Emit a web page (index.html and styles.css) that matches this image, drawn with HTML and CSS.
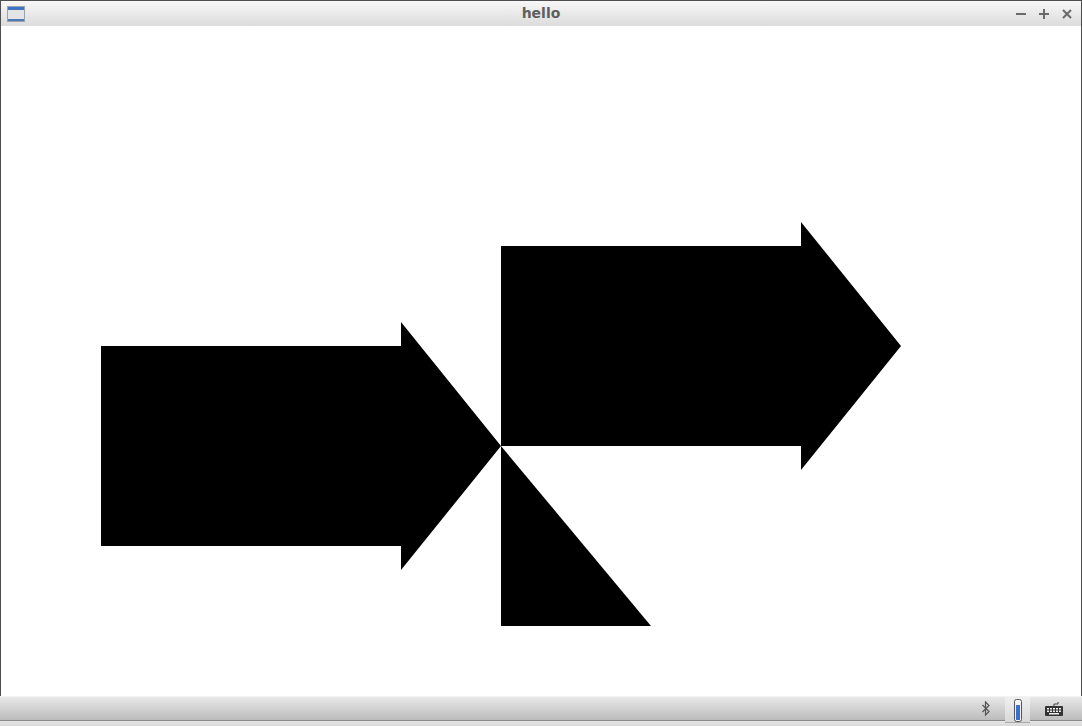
FILE: index.html
```html
<!DOCTYPE html>
<html>
<head>
<meta charset="utf-8">
<link rel="stylesheet" href="styles.css">
</head>
<body>
<div class="screen">
  <div class="window">
    <div class="titlebar">
      <div class="app-icon">
        <svg width="20" height="18" viewBox="0 0 20 18">
          <rect x="0.5" y="0.5" width="17" height="15" fill="#e4e4e4" stroke="#9aa3ad"/>
          <rect x="1" y="1" width="16" height="3" fill="#3f74c4"/>
          <rect x="1" y="13" width="16" height="2" fill="#4d78b8"/>
        </svg>
      </div>
      <div class="title">hello</div>
      <div class="controls">
        <svg width="14" height="14" viewBox="0 0 14 14"><path d="M2 7h10" stroke="#6a6a6a" stroke-width="2"/></svg>
        <svg width="14" height="14" viewBox="0 0 14 14"><path d="M2 7h10M7 2v10" stroke="#6a6a6a" stroke-width="2"/></svg>
        <svg width="14" height="14" viewBox="0 0 14 14"><path d="M3 3l8 8M11 3l-8 8" stroke="#6a6a6a" stroke-width="2"/></svg>
      </div>
    </div>
    <div class="canvas">
      <svg class="drawing" width="1080" height="670" viewBox="0 0 1080 670">
        <polygon points="100,320 400,320 400,296 500,420 400,544 400,520 100,520" fill="#000"/>
        <polygon points="500,220 800,220 800,196 900,320 800,444 800,420 500,420" fill="#000"/>
        <polygon points="500,420 650,600 500,600" fill="#000"/>
      </svg>
    </div>
  </div>
  <div class="taskbar">
    <div class="tray">
      <div class="tray-item bt">
        <svg width="10" height="17" viewBox="0 0 10 17"><path d="M1.5 5l6.5 6.5-3.5 3.5v-13l3.5 3.5-6.5 6.5" fill="none" stroke="#555" stroke-width="1.2"/></svg>
      </div>
      <div class="tray-item active">
        <svg width="12" height="23" viewBox="0 0 12 23">
          <rect x="2.5" y="0.5" width="7" height="22" rx="2" fill="#f4f4f4" stroke="#555"/>
          <rect x="4" y="6" width="4" height="15" fill="#3c6fcf"/>
        </svg>
      </div>
      <div class="tray-item kb">
        <svg width="20" height="16" viewBox="0 0 20 16">
          <path d="M10 5V3h4V1" fill="none" stroke="#444" stroke-width="1"/>
          <rect x="1" y="5" width="18" height="10" rx="1" fill="#333"/>
          <g fill="#eee">
            <rect x="3" y="7" width="2" height="1.5"/><rect x="6" y="7" width="2" height="1.5"/><rect x="9" y="7" width="2" height="1.5"/><rect x="12" y="7" width="2" height="1.5"/><rect x="15" y="7" width="2" height="1.5"/>
            <rect x="3" y="9.5" width="2" height="1.5"/><rect x="6" y="9.5" width="2" height="1.5"/><rect x="9" y="9.5" width="2" height="1.5"/><rect x="12" y="9.5" width="2" height="1.5"/><rect x="15" y="9.5" width="2" height="1.5"/>
            <rect x="5" y="12" width="10" height="1.5"/>
          </g>
        </svg>
      </div>
    </div>
  </div>
  <div class="footer-strip"></div>
</div>
</body>
</html>
```

FILE: styles.css
```css
html, body {
  margin: 0;
  padding: 0;
  background: #ffffff;
  overflow: hidden;
}
.screen {
  width: 1082px;
  height: 726px;
  display: flex;
  flex-direction: column;
}
.window {
  height: 696px;
  flex: none;
  box-sizing: border-box;
  border: 1px solid #4e4e4e;
  border-bottom: none;
  display: flex;
  flex-direction: column;
  background: #fff;
}
.titlebar {
  height: 25px;
  flex: none;
  display: flex;
  align-items: center;
  position: relative;
  background: linear-gradient(#f7f7f7, #dcdcdc);
}
.app-icon {
  width: 20px;
  height: 18px;
  margin-left: 6px;
  margin-top: 2px;
}
.title {
  position: absolute;
  left: 0;
  right: 0;
  top: 0;
  height: 25px;
  line-height: 25px;
  text-align: center;
  font-family: "DejaVu Sans", sans-serif;
  font-weight: bold;
  font-size: 14px;
  color: #5f5f5f;
  pointer-events: none;
}
.controls {
  margin-left: auto;
  margin-right: 7px;
  display: flex;
  gap: 9px;
  align-items: center;
}
.controls svg {
  display: block;
}
.canvas {
  flex: 1;
  background: #fff;
}
.drawing {
  display: block;
}
.taskbar {
  height: 25px;
  box-sizing: border-box;
  flex: none;
  border-top: 1px solid #f2f2f2;
  border-bottom: 1px solid #8a8a8a;
  background: linear-gradient(#e8e8e8, #bcbcbc);
  display: flex;
  justify-content: flex-end;
  align-items: center;
  position: relative;
  z-index: 1;
}
.footer-strip {
  height: 5px;
  flex: none;
  background: linear-gradient(#e6e6e6, #dadada);
}
.tray {
  display: flex;
  align-items: flex-start;
  margin-right: 15px;
  height: 100%;
}
.tray-item {
  height: 23px;
  display: flex;
  align-items: center;
  justify-content: center;
}
.tray-item.bt {
  width: 24px;
  margin-right: 7px;
}
.tray-item.active {
  width: 25px;
  height: 26px;
  align-items: flex-start;
  padding-top: 2px;
  box-sizing: border-box;
  background: linear-gradient(#f0f0f0, #d8d8d8);
  box-shadow: inset 0 -1px 0 #a8a8a8;
}
.tray-item.kb {
  width: 26px;
  margin-left: 11px;
}
```
